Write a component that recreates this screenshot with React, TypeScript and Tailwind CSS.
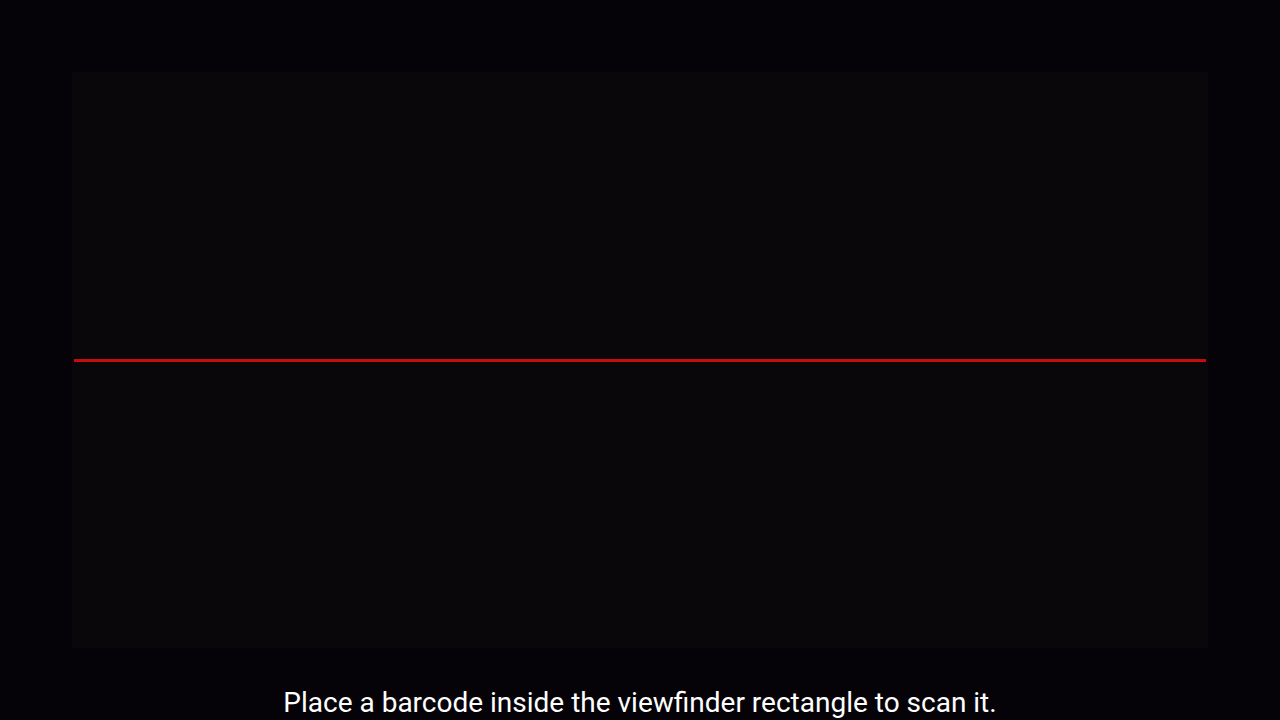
export default function App() {
  return (
    <div className="w-[1280px] h-[720px] bg-[#050307] flex flex-col overflow-hidden" style={{ fontFamily: "Roboto, 'Noto Sans', sans-serif" }}>
      <div className="h-[72px] shrink-0" />
      <div className="px-[72px] shrink-0">
        <div className="h-[576px] bg-[#09070a] flex items-center px-[2px]">
          <div className="h-[3px] w-full bg-[#c80b0b]" />
        </div>
      </div>
      <div className="flex-1 flex justify-center items-start pt-[39px]">
        <p className="text-[28px] leading-[32px] text-white">Place a barcode inside the viewfinder rectangle to scan it.</p>
      </div>
    </div>
  );
}
